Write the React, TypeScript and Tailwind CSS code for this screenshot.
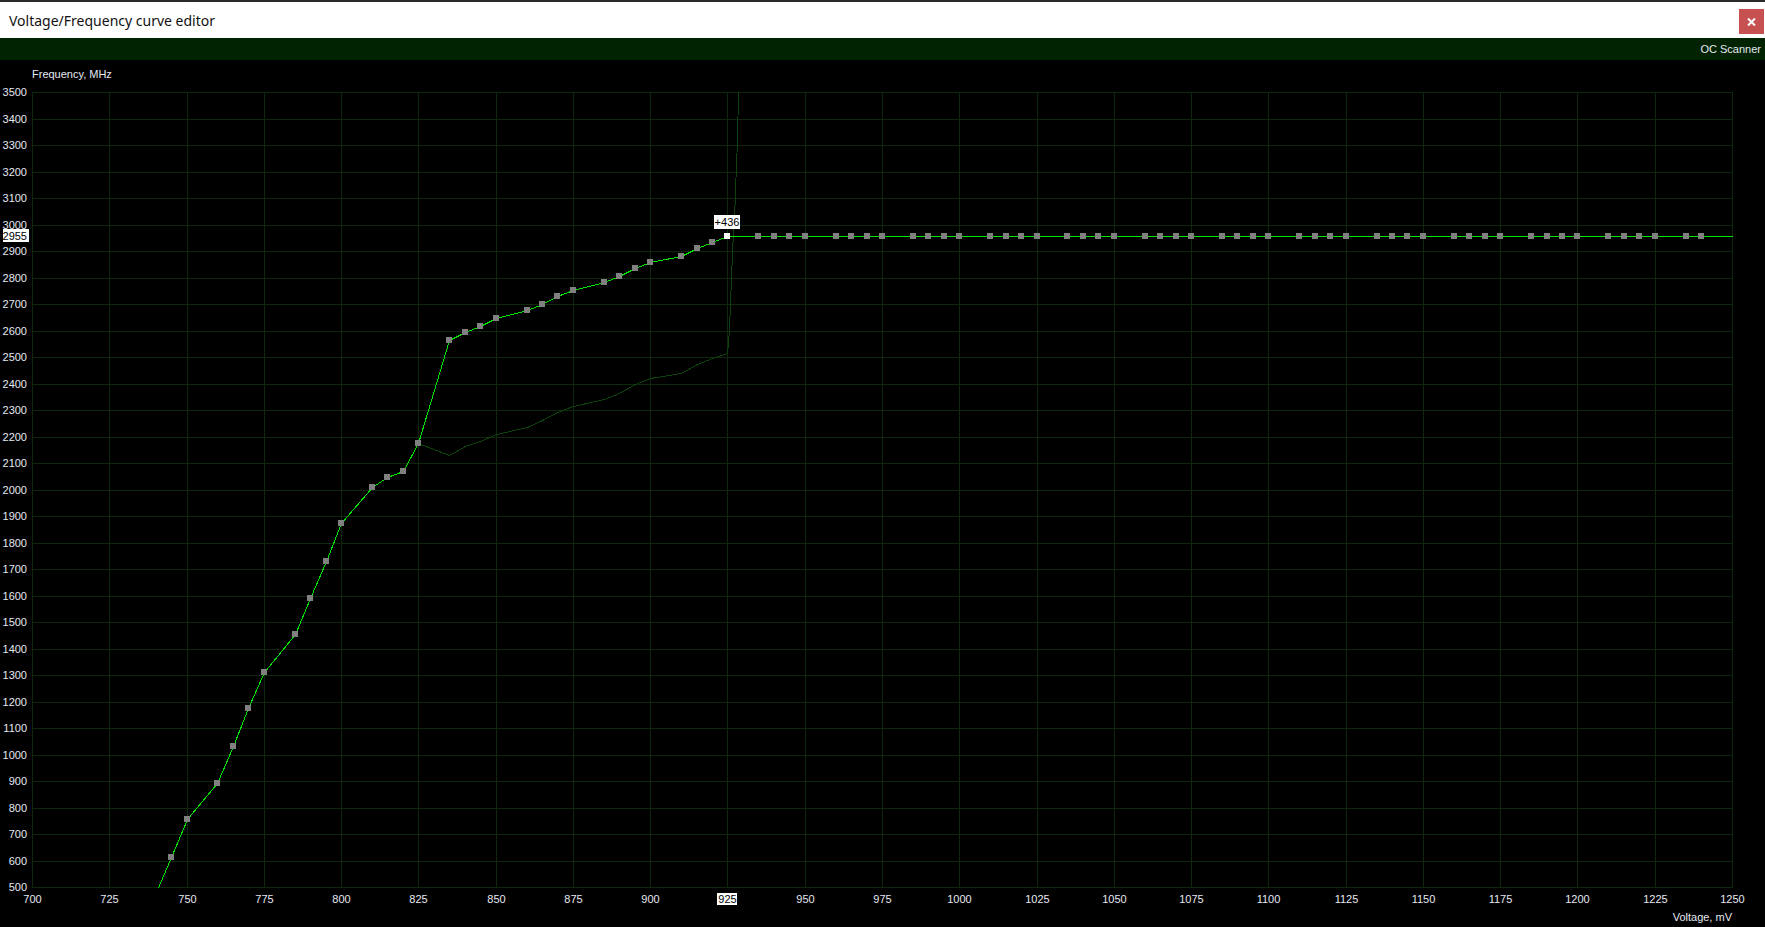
import React from "react";

// plot rectangle in page pixels
const PLOT = { left: 32, top: 92, right: 1732, bottom: 887 };
const V_MIN = 700;
const V_MAX = 1250;
const F_MIN = 500;
const F_MAX = 3500;

const vx = (v: number) => PLOT.left + ((v - V_MIN) * (PLOT.right - PLOT.left)) / (V_MAX - V_MIN);
const fy = (f: number) => PLOT.top + ((F_MAX - f) * (PLOT.bottom - PLOT.top)) / (F_MAX - F_MIN);
const px = (n: number) => Math.round(n) + 0.5;

const LOCKED_V = 925;
const LOCKED_F = 2955;

// voltage (mV) -> frequency (MHz), edited curve up to the lock point
const edited: [number, number][] = [
  [740, 480], [745, 615], [750, 758], [760, 894], [765, 1033], [770, 1177], [775, 1312],
  [785, 1456], [790, 1592], [795, 1731], [800, 1875], [810, 2011], [815, 2048], [820, 2071],
  [825, 2177], [835, 2565], [840, 2595], [845, 2618], [850, 2648], [860, 2679], [865, 2701],
  [870, 2731], [875, 2754], [885, 2784], [890, 2807], [895, 2837], [900, 2860], [910, 2882],
  [915, 2912], [920, 2935], [925, 2955],
];

const flat: [number, number][] = [];
for (let v = 930; v <= 1240; v += 5) {
  if (v % 25 !== 5) flat.push([v, LOCKED_F]);
}

const curve: [number, number][] = [...edited, ...flat, [V_MAX, LOCKED_F]];
const markers = curve.filter(([v]) => v >= 745 && v <= 1240);

// stock curve, drawn dim underneath
const stock: [number, number][] = [
  [825, 2177], [835, 2130], [840, 2164], [845, 2183], [850, 2209], [860, 2237], [865, 2262],
  [870, 2294], [875, 2316], [885, 2343], [890, 2365], [895, 2398], [900, 2422], [910, 2441],
  [915, 2474], [920, 2495], [925, 2516], [925.4, 2602], [925.7, 2709], [926, 2791],
  [926.5, 2904], [927, 3017], [927.5, 3130], [928, 3319], [928.5, 3500], [929, 3600],
];

const toPoints = (pts: [number, number][]) =>
  pts.map(([v, f]) => `${px(vx(v))},${px(fy(f))}`).join(" ");

const vTicks: number[] = [];
for (let v = V_MIN; v <= V_MAX; v += 25) vTicks.push(v);
const fTicks: number[] = [];
for (let f = F_MIN; f <= F_MAX; f += 100) fTicks.push(f);

const LABEL = "#e6e9f2";

function CurveChart() {
  return (
    <svg
      width={1765}
      height={867}
      viewBox="0 60 1765 867"
      className="block"
      style={{ fontFamily: '"Liberation Sans", Arial, sans-serif', fontSize: 11 }}
    >
      <defs>
        <clipPath id="plot">
          <rect x={PLOT.left} y={PLOT.top} width={PLOT.right - PLOT.left + 1} height={PLOT.bottom - PLOT.top + 1} />
        </clipPath>
      </defs>

      <text x={32} y={78} fill={LABEL}>
        Frequency, MHz
      </text>

      <g stroke="#0d280d" strokeWidth={1} shapeRendering="crispEdges">
        {vTicks.map((v) => (
          <line key={v} x1={px(vx(v))} x2={px(vx(v))} y1={PLOT.top} y2={PLOT.bottom + 1} />
        ))}
        {fTicks.map((f) => (
          <line key={f} x1={PLOT.left} x2={PLOT.right + 1} y1={px(fy(f))} y2={px(fy(f))} />
        ))}
      </g>

      {fTicks.map((f) => (
        <text key={f} x={27} y={Math.round(fy(f)) + 4} textAnchor="end" fill={LABEL}>
          {f}
        </text>
      ))}
      {vTicks
        .filter((v) => v !== LOCKED_V)
        .map((v) => (
          <text key={v} x={Math.round(vx(v)) + 0.5} y={903} textAnchor="middle" fill={LABEL}>
            {v}
          </text>
        ))}

      <text x={1732} y={921} textAnchor="end" fill={LABEL}>
        Voltage, mV
      </text>

      <g clipPath="url(#plot)" fill="none" strokeWidth={1} shapeRendering="crispEdges">
        <polyline points={toPoints(stock)} stroke="#0c420c" />
        <polyline points={toPoints(curve)} stroke="#00e600" />
      </g>

      <g shapeRendering="crispEdges">
        {markers.map(([v, f]) => (
          <rect
            key={v}
            x={Math.round(vx(v)) - 3}
            y={Math.round(fy(f)) - 3}
            width={6}
            height={6}
            fill={v === LOCKED_V ? "#ffffff" : "#808080"}
          />
        ))}
      </g>

      {/* lock point readouts */}
      <rect x={3} y={229} width={26} height={13} fill="#ffffff" />
      <text x={27} y={240} textAnchor="end" fill="#000000">
        {LOCKED_F}
      </text>

      <rect x={717} y={893} width={20} height={12} fill="#ffffff" />
      <text x={727.5} y={903} textAnchor="middle" fill="#000000">
        {LOCKED_V}
      </text>

      <rect x={714} y={215} width={26} height={14} fill="#ffffff" />
      <text x={727} y={226} textAnchor="middle" fill="#000000">
        +436
      </text>
    </svg>
  );
}

export default function App() {
  return (
    <div className="flex h-[927px] w-[1765px] flex-col overflow-hidden bg-black">
      <div className="h-[2px] bg-[#2b2b2b]" />
      <div className="flex h-[36px] items-center justify-between bg-white pl-[9px] pr-[1px]">
        <span className="text-[14px] text-[#111] [font-family:'Noto_Sans',sans-serif]">
          Voltage/Frequency curve editor
        </span>
        <button className="mt-[3px] flex h-[25px] w-[25px] items-center justify-center bg-[#c75050]">
          <svg width="9" height="8" viewBox="0 0 9 8">
            <path d="M1 0.5 L8 7.5 M8 0.5 L1 7.5" stroke="#ffffff" strokeWidth="2" />
          </svg>
        </button>
      </div>
      <div className="flex h-[22px] items-center justify-end bg-[#022302] pr-[4px]">
        <span className="text-[11px] text-[#e6e9f2] [font-family:'Liberation_Sans',Arial,sans-serif]">
          OC Scanner
        </span>
      </div>
      <CurveChart />
    </div>
  );
}
